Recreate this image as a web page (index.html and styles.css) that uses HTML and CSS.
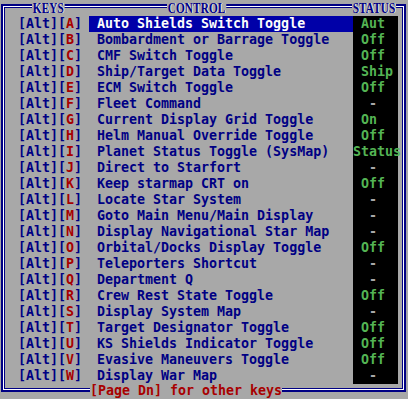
FILE: index.html
```html
<!DOCTYPE html>
<html lang="en">
<head>
  <meta charset="UTF-8" />
  <title>Keys</title>
  <link rel="stylesheet" href="styles.css">
</head>
<body>
  <div class="screen">
    <div class="frame">
      <div class="heads">
        <span class="label keys-label">KEYS</span>
        <span class="label control-label">CONTROL</span>
        <span class="label status-label">STATUS</span>
      </div>

      <div class="list">
        <div class="row selected"><span class="key">[Alt][<b>A</b>]</span><span class="ctl">Auto Shields Switch Toggle</span><span class="st">Aut</span></div>
        <div class="row"><span class="key">[Alt][<b>B</b>]</span><span class="ctl">Bombardment or Barrage Toggle</span><span class="st">Off</span></div>
        <div class="row"><span class="key">[Alt][<b>C</b>]</span><span class="ctl">CMF Switch Toggle</span><span class="st">Off</span></div>
        <div class="row"><span class="key">[Alt][<b>D</b>]</span><span class="ctl">Ship/Target Data Toggle</span><span class="st">Ship</span></div>
        <div class="row"><span class="key">[Alt][<b>E</b>]</span><span class="ctl">ECM Switch Toggle</span><span class="st">Off</span></div>
        <div class="row"><span class="key">[Alt][<b>F</b>]</span><span class="ctl">Fleet Command</span><span class="st dash">-</span></div>
        <div class="row"><span class="key">[Alt][<b>G</b>]</span><span class="ctl">Current Display Grid Toggle</span><span class="st">On</span></div>
        <div class="row"><span class="key">[Alt][<b>H</b>]</span><span class="ctl">Helm Manual Override Toggle</span><span class="st">Off</span></div>
        <div class="row"><span class="key">[Alt][<b>I</b>]</span><span class="ctl">Planet Status Toggle (SysMap)</span><span class="st wide">Status</span></div>
        <div class="row"><span class="key">[Alt][<b>J</b>]</span><span class="ctl">Direct to Starfort</span><span class="st dash">-</span></div>
        <div class="row"><span class="key">[Alt][<b>K</b>]</span><span class="ctl">Keep starmap CRT on</span><span class="st">Off</span></div>
        <div class="row"><span class="key">[Alt][<b>L</b>]</span><span class="ctl">Locate Star System</span><span class="st dash">-</span></div>
        <div class="row"><span class="key">[Alt][<b>M</b>]</span><span class="ctl">Goto Main Menu/Main Display</span><span class="st dash">-</span></div>
        <div class="row"><span class="key">[Alt][<b>N</b>]</span><span class="ctl">Display Navigational Star Map</span><span class="st dash">-</span></div>
        <div class="row"><span class="key">[Alt][<b>O</b>]</span><span class="ctl">Orbital/Docks Display Toggle</span><span class="st">Off</span></div>
        <div class="row"><span class="key">[Alt][<b>P</b>]</span><span class="ctl">Teleporters Shortcut</span><span class="st dash">-</span></div>
        <div class="row"><span class="key">[Alt][<b>Q</b>]</span><span class="ctl">Department Q</span><span class="st dash">-</span></div>
        <div class="row"><span class="key">[Alt][<b>R</b>]</span><span class="ctl">Crew Rest State Toggle</span><span class="st">Off</span></div>
        <div class="row"><span class="key">[Alt][<b>S</b>]</span><span class="ctl">Display System Map</span><span class="st dash">-</span></div>
        <div class="row"><span class="key">[Alt][<b>T</b>]</span><span class="ctl">Target Designator Toggle</span><span class="st">Off</span></div>
        <div class="row"><span class="key">[Alt][<b>U</b>]</span><span class="ctl">KS Shields Indicator Toggle</span><span class="st">Off</span></div>
        <div class="row"><span class="key">[Alt][<b>V</b>]</span><span class="ctl">Evasive Maneuvers Toggle</span><span class="st">Off</span></div>
        <div class="row"><span class="key">[Alt][<b>W</b>]</span><span class="ctl">Display War Map</span><span class="st dash">-</span></div>
      </div>
    </div>

    <div class="foot"><span class="hint">[Page Dn] for other keys</span></div>
  </div>
</body>
</html>
```

FILE: styles.css
```css
body {
  margin: 0;
  background: #a8a8a8;
}
.screen {
  width: 408px;
  height: 399px;
  background: #a8a8a8;
  overflow: hidden;
  font-family: "DejaVu Sans Mono", "Liberation Mono", monospace;
  font-weight: bold;
  font-size: 13.3px;
  line-height: 16px;
  color: #000084;
}
.frame {
  margin: 4px 2px 0 1px;
  height: 380px;
  border: 2px solid #000084;
  box-shadow: inset 0 0 0 1px #ffffff, inset 0 0 0 2px #000084;
  padding: 2px;
}
.heads {
  display: grid;
  grid-template-columns: 84px 264px 45px;
  height: 16px;
  margin-top: -8px;
  align-items: center;
}
.label {
  justify-self: start;
  background: #a8a8a8;
  font-family: "Liberation Serif", "DejaVu Serif", serif;
  font-size: 15px;
  line-height: 16px;
  text-shadow: 1px 0 0 #ffffff;
  transform: scaleX(0.76);
  transform-origin: left center;
  padding: 0 1px;
}
.keys-label {
  margin-left: 27px;
}
.control-label {
  margin-left: 78px;
}
.status-label {
  margin-left: -1px;
}
.row {
  display: grid;
  grid-template-columns: 84px 264px 45px;
  height: 16px;
  white-space: pre;
}
.key {
  padding-left: 13px;
}
.key b {
  color: #a80000;
}
.ctl {
  padding-left: 8px;
}
.selected .ctl {
  background: #0000a8;
  color: #fcfcfc;
}
.st {
  background: #000000;
  color: #54b454;
  padding-left: 8px;
}
.st.dash {
  padding-left: 16px;
  color: #a8a8a8;
}
.st.wide {
  padding-left: 0;
}
.foot {
  margin-top: -9px;
  height: 16px;
  padding-left: 90px;
}
.hint {
  background: #a8a8a8;
  color: #a80000;
}
```
